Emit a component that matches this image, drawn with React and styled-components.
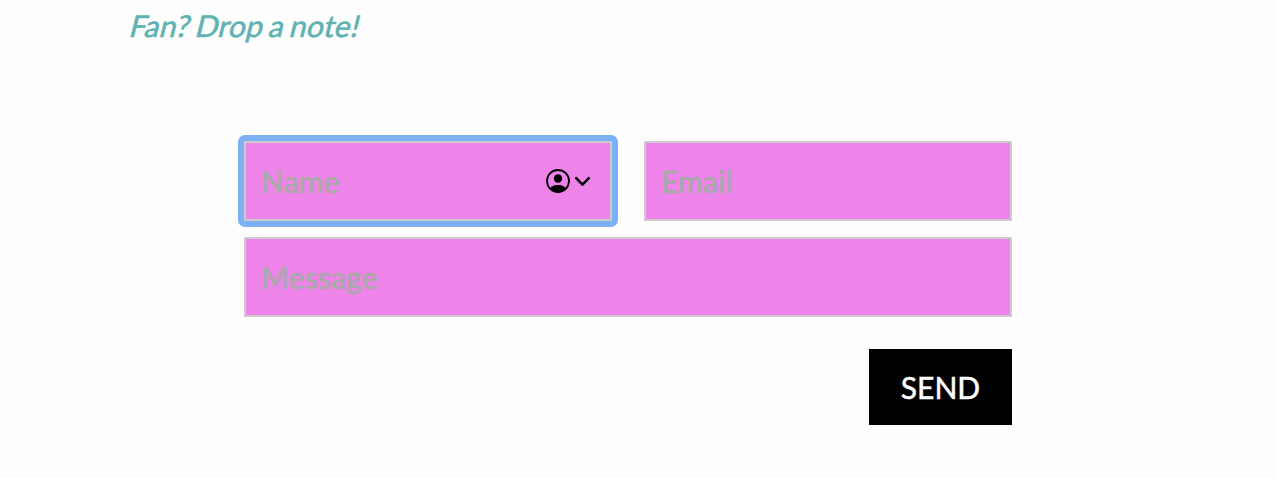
import React from "react";
import styled, { createGlobalStyle } from "styled-components";

const GlobalStyle = createGlobalStyle`
  * { box-sizing: border-box; }
  body { margin: 0; background: #fefefe; font-family: Lato, sans-serif; overflow: hidden; }
`;

const Page = styled.main`
  width: 1276px;
  height: 478px;
  padding: 1px 0 0 128px;
  background: #fefefe;
`;

const Heading = styled.p`
  margin: 0;
  width: max-content;
  height: 48px;
  font: 400 30px/48px Lato, sans-serif;
  letter-spacing: 0.25px;
  word-spacing: -2.2px;
  -webkit-text-stroke: 0.6px currentColor;
  transform: skewX(-14deg);
  transform-origin: 0 36px;
  color: #5fb2b2;
  white-space: nowrap;
`;

const Form = styled.form`
  width: 768px;
  margin: 92px 0 0 116px;
  display: flex;
  flex-direction: column;
`;

const Row = styled.div`
  display: grid;
  grid-template-columns: repeat(2, minmax(0, 1fr));
  gap: 32px;
  margin-bottom: 16px;
`;

const Field = styled.label`
  display: flex;
  align-items: center;
  height: 80px;
  padding: 0 19px 0 15px;
  background: #ee83ea;
  border: 2px solid #ccc;
`;

const FocusRing = styled.div`
  margin: -6px;
  padding: 6px;
  border-radius: 7px;
  background: #7eb0f7;
`;

const Input = styled.input`
  flex: 1;
  min-width: 0;
  height: 100%;
  padding: 0;
  border: 0;
  outline: 0;
  background: transparent;
  font: 400 30px/45px Lato, sans-serif;
  letter-spacing: 0.2px;
  -webkit-text-stroke: 0.7px #a9a9a9;
  &::placeholder { color: #a9a9a9; opacity: 1; }
`;

const Autofill = styled.svg`
  width: 46px;
  height: 26px;
  flex: none;
`;

const Send = styled.button`
  align-self: flex-end;
  width: 143px;
  height: 76px;
  margin-top: 32px;
  padding: 0;
  border: 0;
  background: #000;
  color: #fff;
  font: 400 30px/45px Lato, sans-serif;
  -webkit-text-stroke: 0.5px #fff;
`;

export default function App() {
  return (
    <>
      <GlobalStyle />
      <Page>
        <Heading>Fan? Drop a note!</Heading>
        <Form>
          <Row>
            <FocusRing>
              <Field>
                <Input placeholder="Name" />
                <Autofill viewBox="0 0 46 26" fill="none">
                  <defs><clipPath id="badge"><circle cx="13" cy="13" r="11" /></clipPath></defs>
                  <circle cx="13" cy="13" r="11" stroke="#000" strokeWidth="1.8" />
                  <circle cx="13" cy="10.5" r="4.2" fill="#000" />
                  <ellipse cx="13" cy="22" rx="8.5" ry="5" fill="#000" clipPath="url(#badge)" />
                  <path d="M31.2 10.2l6.3 6.5 6.3-6.5" stroke="#000" strokeWidth="2.5" strokeLinecap="round" strokeLinejoin="round" />
                </Autofill>
              </Field>
            </FocusRing>
            <Field><Input placeholder="Email" /></Field>
          </Row>
          <Field><Input placeholder="Message" /></Field>
          <Send type="button">SEND</Send>
        </Form>
      </Page>
    </>
  );
}
